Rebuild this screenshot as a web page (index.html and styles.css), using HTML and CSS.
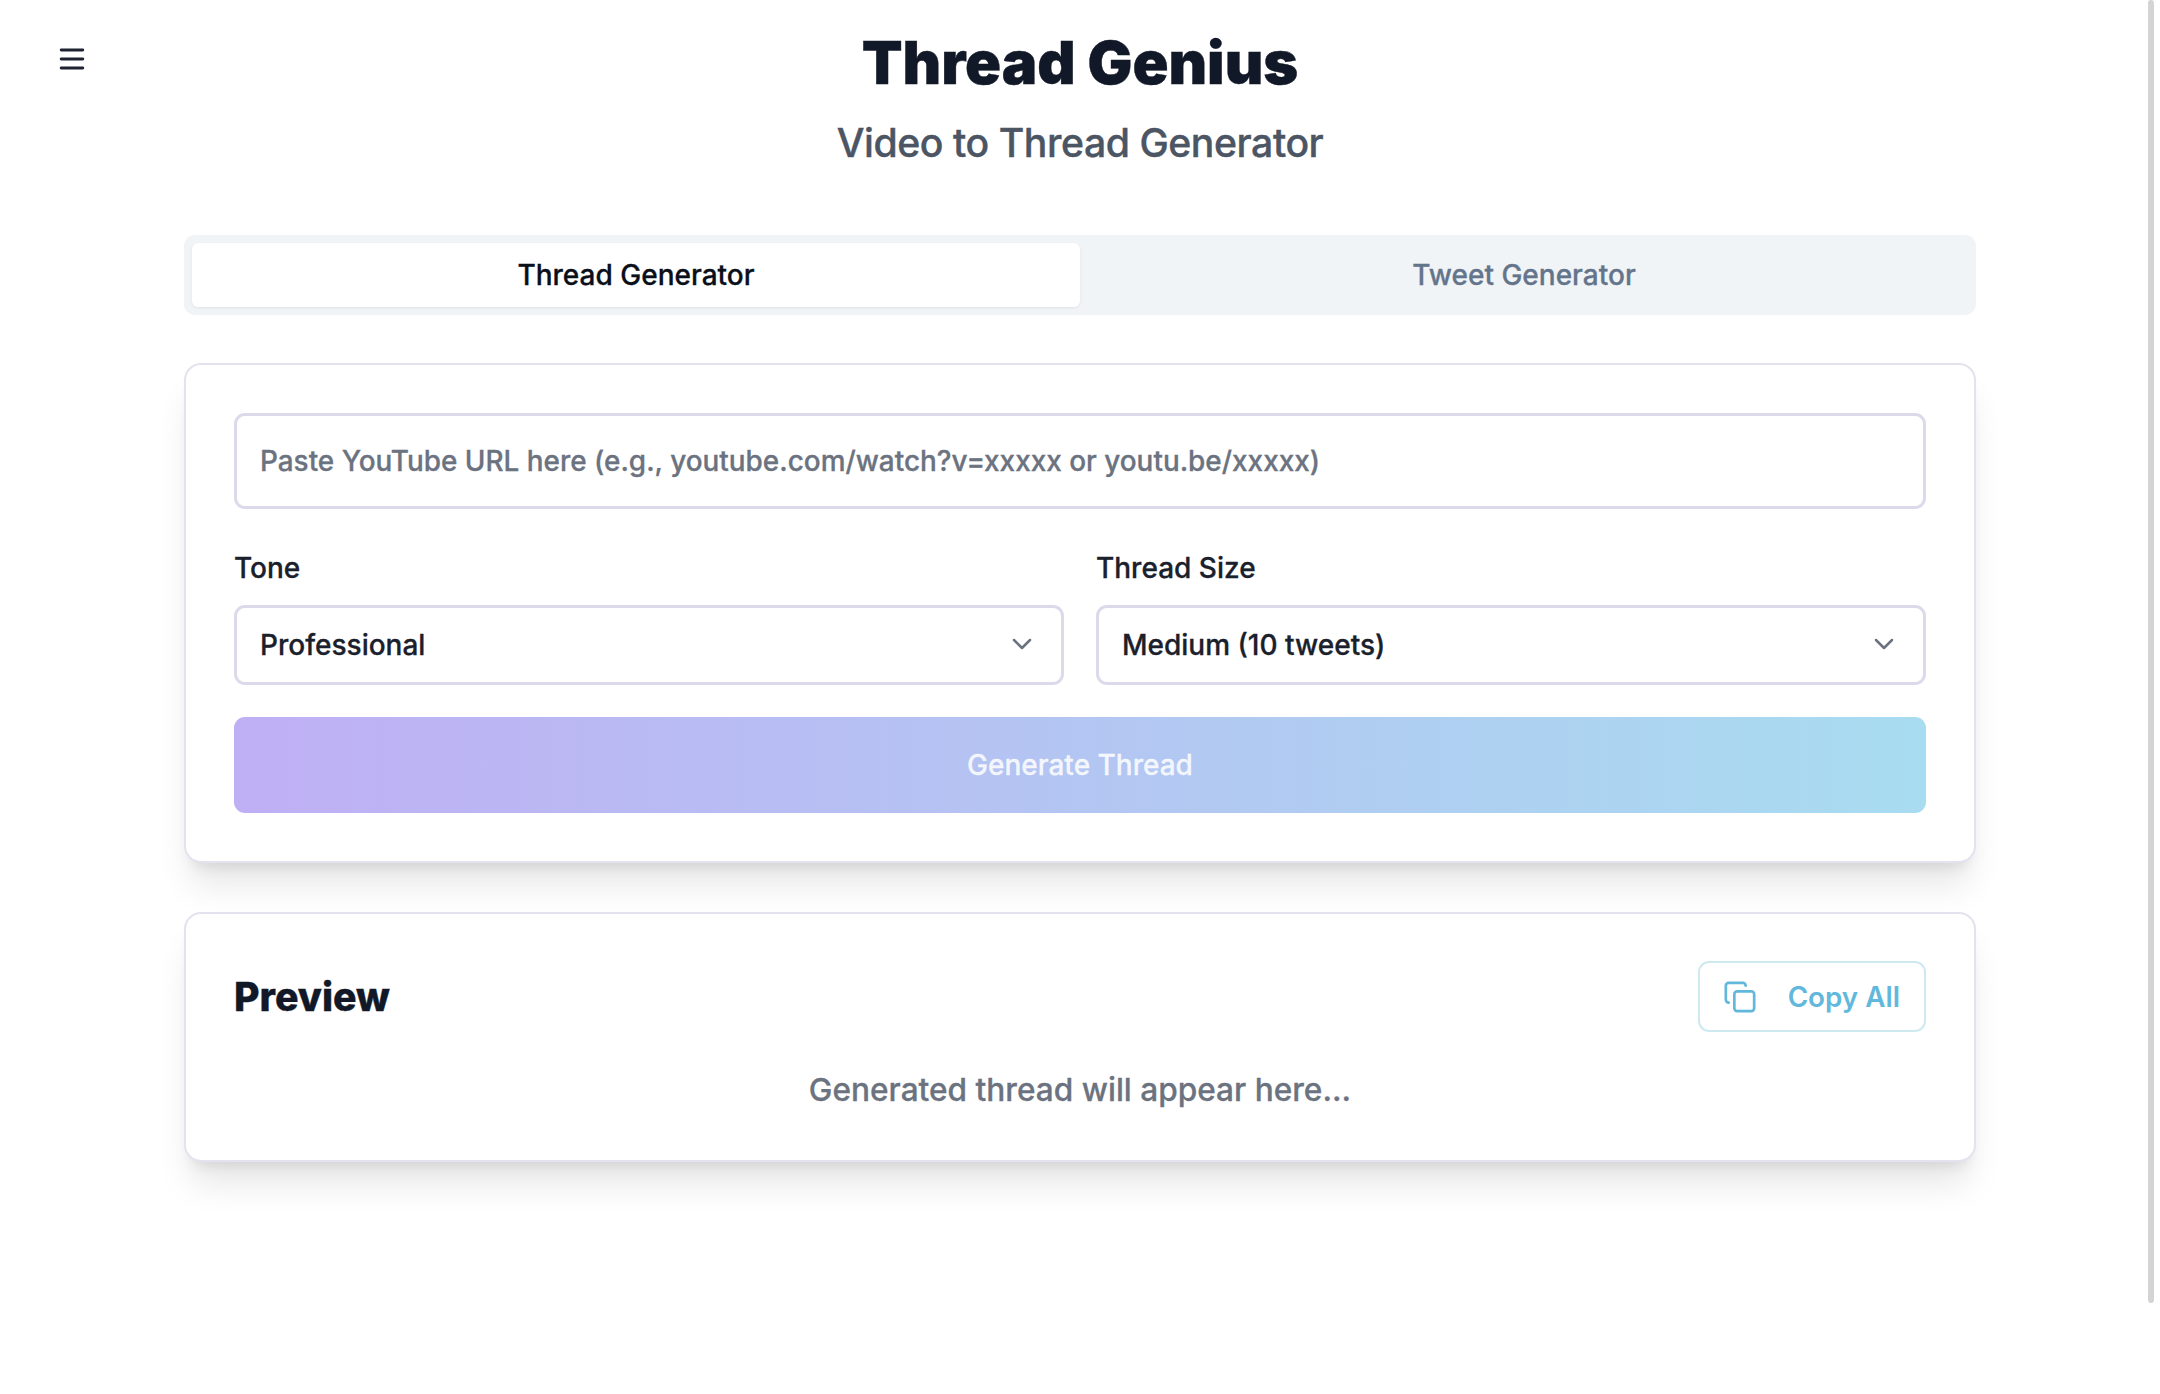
FILE: index.html
```html
<!DOCTYPE html>
<html lang="en">
<head>
<meta charset="utf-8">
<title>Thread Genius</title>
<link rel="stylesheet" href="styles.css">
</head>
<body>
<button class="menu-btn" aria-label="Menu">
  <svg class="menu-icon" viewBox="0 0 24 24" fill="none" stroke="currentColor" stroke-width="1.9" stroke-linecap="round"><line x1="4.8" y1="6" x2="19.2" y2="6"/><line x1="4.8" y1="12" x2="19.2" y2="12"/><line x1="4.8" y1="18" x2="19.2" y2="18"/></svg>
</button>
<div class="scroll-thumb"></div>
<main class="page">
  <header class="header">
    <h1 class="title">Thread Genius</h1>
    <p class="subtitle">Video to Thread Generator</p>
  </header>
  <div class="tabs">
    <div class="tab tab-active">Thread Generator</div>
    <div class="tab">Tweet Generator</div>
  </div>
  <section class="card form-card">
    <input class="url-input" type="text" placeholder="Paste YouTube URL here (e.g., youtube.com/watch?v=xxxxx or youtu.be/xxxxx)">
    <div class="fields">
      <div class="field">
        <label class="label">Tone</label>
        <div class="select-wrap">
          <select class="select"><option>Professional</option></select>
          <svg class="chevron" viewBox="0 0 24 24" fill="none" stroke="currentColor" stroke-width="1.9" stroke-linecap="round" stroke-linejoin="round"><path d="m6 9 6 6 6-6"/></svg>
        </div>
      </div>
      <div class="field">
        <label class="label">Thread Size</label>
        <div class="select-wrap">
          <select class="select"><option>Medium (10 tweets)</option></select>
          <svg class="chevron" viewBox="0 0 24 24" fill="none" stroke="currentColor" stroke-width="1.9" stroke-linecap="round" stroke-linejoin="round"><path d="m6 9 6 6 6-6"/></svg>
        </div>
      </div>
    </div>
    <button class="generate">Generate Thread</button>
  </section>
  <section class="card preview-card">
    <div class="preview-head">
      <h2 class="preview-title">Preview</h2>
      <button class="copy">
        <svg class="copy-icon" viewBox="0 0 24 24" fill="none" stroke="currentColor" stroke-width="1.9" stroke-linecap="round" stroke-linejoin="round"><rect x="8" y="8" width="14" height="14" rx="2"/><path d="M4 16c-1.1 0-2-.9-2-2V4c0-1.1.9-2 2-2h10c1.1 0 2 .9 2 2"/></svg>
        <span>Copy All</span>
      </button>
    </div>
    <p class="empty">Generated thread will appear here...</p>
  </section>
</main>
</body>
</html>
```
FILE: styles.css
```css
* { box-sizing: border-box; }
html, body { margin: 0; padding: 0; }
body {
  background: #fff;
  font-family: Inter, "Liberation Sans", sans-serif;
  color: #111827;
  min-height: 1394px;
  position: relative;
  overflow: hidden;
}
.menu-btn {
  position: absolute;
  left: 54px;
  top: 41px;
  width: 36px;
  height: 36px;
  padding: 0;
  border: 0;
  background: none;
  color: #1f2330;
}
.menu-icon { display: block; width: 36px; height: 36px; }
.scroll-thumb {
  position: absolute;
  right: 6px;
  top: 0;
  width: 6px;
  height: 1303px;
  border-radius: 3px;
  background: #d4d4d4;
}
.page {
  width: 1792px;
  margin: 0 auto;
  padding-top: 28px;
}
.header { text-align: center; margin-bottom: 67px; }
.title {
  margin: 0;
  font-size: 59.5px;
  line-height: 68px;
  font-weight: 900;
  color: #111827;
  -webkit-text-stroke: 0.4px #111827;
}
.subtitle {
  margin: 22px 0 0;
  font-size: 39.2px;
  line-height: 50px;
  letter-spacing: -0.45px;
  font-weight: 500;
  color: #4b5563;
  -webkit-text-stroke: 0.4px #4b5563;
}
.tabs {
  display: grid;
  grid-template-columns: 1fr 1fr;
  height: 80px;
  padding: 8px;
  border-radius: 11px;
  background: #f0f4f7;
}
.tab {
  display: flex;
  align-items: center;
  justify-content: center;
  font-size: 28px;
  font-weight: 500;
  color: #64748b;
  border-radius: 6px;
  -webkit-text-stroke: 0.3px currentColor;
}
.tab-active {
  background: #fff;
  color: #0a0f1a;
  box-shadow: 0 1px 3px rgba(0,0,0,.07);
}
.card {
  background: #fff;
  border: 2px solid #e3e2ee;
  border-radius: 17px;
  box-shadow: 0 28px 35px -7px rgba(0,0,0,.1), 0 11px 14px -8px rgba(0,0,0,.1);
}
.form-card { margin-top: 48px; padding: 48px; }
.preview-card { margin-top: 49px; padding: 47px 48px 50px; }
.url-input {
  display: block;
  width: 100%;
  height: 96px;
  padding: 0 23px;
  border: 3px solid #dcd9ea;
  border-radius: 11px;
  font: 500 27.9px Inter, "Liberation Sans", sans-serif;
  color: #111827;
  outline: none;
  background: #fff;
}
.url-input::placeholder { color: #6b7280; opacity: 1; -webkit-text-stroke: 0.3px #6b7280; }
.fields {
  display: grid;
  grid-template-columns: 1fr 1fr;
  gap: 32px;
  margin-top: 41px;
}
.label {
  display: block;
  font-size: 28px;
  line-height: 36px;
  font-weight: 500;
  color: #1a202c;
  margin-bottom: 19px;
  -webkit-text-stroke: 0.3px #1a202c;
}
.select-wrap { position: relative; }
.select {
  display: block;
  width: 100%;
  height: 80px;
  padding: 0 23px;
  appearance: none;
  border: 3px solid #dcd9ea;
  border-radius: 11px;
  background: #fff;
  font: 500 28px Inter, "Liberation Sans", sans-serif;
  color: #1a202c;
  outline: none;
  -webkit-text-stroke: 0.3px #1a202c;
}
.chevron {
  position: absolute;
  right: 26px;
  top: 23px;
  width: 32px;
  height: 32px;
  color: #6b7280;
}
.generate {
  display: block;
  width: 100%;
  height: 96px;
  margin-top: 32px;
  border: 0;
  border-radius: 11px;
  background: linear-gradient(90deg, #bfaff4, #a8dcf0);
  color: rgba(255,255,255,.85);
  font: 500 28px Inter, "Liberation Sans", sans-serif;
  -webkit-text-stroke: 0.3px rgba(255,255,255,.85);
}
.preview-head {
  display: flex;
  align-items: center;
  justify-content: space-between;
}
.preview-title {
  margin: 0;
  font-size: 39.2px;
  font-weight: 800;
  color: #111827;
  -webkit-text-stroke: 0.4px #111827;
}
.copy {
  display: flex;
  align-items: center;
  gap: 31px;
  height: 71px;
  padding: 0 24px 0 23px;
  border: 2px solid #cfe9f0;
  border-radius: 11px;
  background: #fff;
  color: #62b8dc;
  font: 600 27.8px Inter, "Liberation Sans", sans-serif;
}
.copy-icon { display: block; width: 34px; height: 34px; }
.empty {
  margin: 38px 0 0;
  text-align: center;
  font-size: 31.6px;
  line-height: 40px;
  font-weight: 500;
  color: #6b7280;
  -webkit-text-stroke: 0.3px #6b7280;
}
```
